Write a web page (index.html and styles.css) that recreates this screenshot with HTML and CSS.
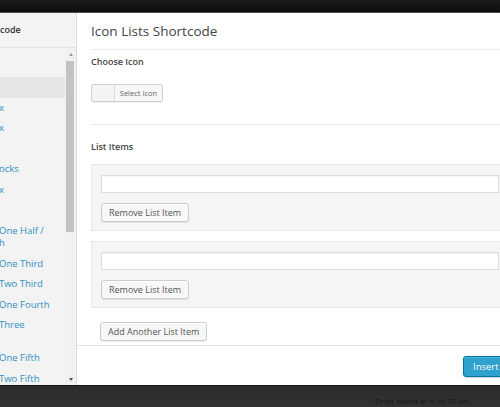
FILE: index.html
```html
<!DOCTYPE html>
<html>
<head>
<meta charset="utf-8">
<link rel="stylesheet" href="styles.css">
</head>
<body>
<div class="topbar"></div>
<div class="modal">
  <aside class="side">
    <div class="side-head">code</div>
    <div class="side-body">
      <ul class="menu">
        <li class="active">&nbsp;</li>
        <li>x</li>
        <li>x</li>
        <li>&nbsp;</li>
        <li>ocks</li>
        <li>x</li>
        <li>&nbsp;</li>
        <li>One Half /<br>h</li>
        <li>One Third</li>
        <li>Two Third</li>
        <li>One Fourth</li>
        <li>Three<br>&nbsp;</li>
        <li>One Fifth</li>
        <li>Two Fifth</li>
      </ul>
      <div class="scroll">
        <div class="arrow up"></div>
        <div class="thumb"></div>
        <div class="track"></div>
        <div class="arrow down"></div>
      </div>
    </div>
  </aside>
  <main class="main">
    <header class="main-head"><h1>Icon Lists Shortcode</h1></header>
    <div class="content">
      <section class="field field-icon">
        <h2>Choose Icon</h2>
        <div class="picker"><span class="swatch"></span><span class="pick-btn">Select Icon</span></div>
      </section>
      <section class="field">
        <h2>List Items</h2>
        <div class="item-box">
          <input class="text-input" type="text">
          <button class="btn">Remove List Item</button>
        </div>
        <div class="item-box">
          <input class="text-input" type="text">
          <button class="btn">Remove List Item</button>
        </div>
        <button class="btn btn-add">Add Another List Item</button>
      </section>
    </div>
    <footer class="main-foot"><button class="btn-primary">Insert Icon List</button></footer>
  </main>
</div>
<div class="bottombar"><span class="draft">Draft saved at 4:16:37 am.</span></div>
</body>
</html>
```

FILE: styles.css
```css
* { box-sizing: border-box; margin: 0; padding: 0; }
html, body { overflow: hidden; }
body {
  width: 500px;
  height: 407px;
  background: #2d2d2d;
  font-family: "Open Sans", "Liberation Sans", sans-serif;
  display: flex;
  flex-direction: column;
}
.topbar {
  flex: none;
  height: 13px;
  background: linear-gradient(#1c1c1c, #0e0e0e);
  border-bottom: 1px solid #4a4a4a;
}
.modal {
  flex: none;
  display: flex;
  width: 568px;
  height: 372px;
  background: #fff;
}
.side {
  flex: none;
  width: 77px;
  background: #f3f3f3;
  border-right: 1px solid #dcdcdc;
  display: flex;
  flex-direction: column;
}
.side-head {
  height: 35px;
  line-height: 34px;
  border-bottom: 1px solid #e2e2e2;
  font-size: 9px;
  font-weight: 600;
  color: #333;
}
.side-body {
  flex: 1;
  display: flex;
  overflow: hidden;
}
.menu {
  flex: 1;
  list-style: none;
  padding-top: 29px;
  overflow: hidden;
}
.menu li {
  font-size: 9.5px;
  line-height: 12.5px;
  padding: 4px 0;
  margin-left: -1px;
  color: #2e8fc0;
  white-space: nowrap;
}
.menu li.active { background: #e6e6e6; }
.scroll {
  flex: none;
  width: 11px;
  display: flex;
  flex-direction: column;
  background: #f1f1f1;
}
.arrow {
  height: 13px;
  display: flex;
  align-items: center;
  justify-content: center;
}
.arrow::before {
  content: "";
  border-left: 2.5px solid transparent;
  border-right: 2.5px solid transparent;
}
.arrow.up::before { border-bottom: 3px solid #9a9a9a; }
.arrow.down { height: 12px; }
.arrow.down::before { border-top: 3px solid #555; }
.thumb {
  height: 171px;
  margin: 0 2px 0 1px;
  background: #c3c3c3;
}
.track { flex: 1; }

.main {
  flex: 1;
  display: flex;
  flex-direction: column;
}
.main-head {
  margin: 0 14px;
  height: 37px;
  border-bottom: 1px solid #ececec;
}
.main-head h1 {
  font-size: 13.5px;
  font-weight: 400;
  line-height: 36px;
  color: #444;
}
.content {
  flex: 1;
  padding: 0 14px;
}
.field h2 {
  font-size: 9px;
  font-weight: 600;
  line-height: 12px;
  color: #444;
}
.field-icon {
  padding-bottom: 22px;
  border-bottom: 1px solid #ececec;
}
.field-icon h2 { margin-top: 6px; }
.field + .field h2 { margin-top: 16px; }
.picker {
  margin-top: 16px;
  display: flex;
  width: 72px;
  height: 18px;
  border: 1px solid #cfcfcf;
  border-radius: 2px;
  box-shadow: 0 1px 0 rgba(0,0,0,0.05);
}
.swatch {
  width: 23px;
  background: #f4f4f4;
  border-right: 1px solid #dcdcdc;
}
.pick-btn {
  flex: 1;
  font-size: 7.5px;
  line-height: 16px;
  text-align: center;
  color: #666;
  background: #f7f7f7;
}
.item-box {
  margin-top: 11px;
  background: #f5f5f5;
  border: 1px solid #e8e8e8;
  padding: 10px 9px 8px;
}
.item-box + .item-box { margin-top: 10px; }
.text-input {
  display: block;
  width: 398px;
  height: 18px;
  background: #fff;
  border: 1px solid #dddddd;
  box-shadow: inset 0 1px 2px rgba(0,0,0,0.06);
}
.btn {
  display: block;
  margin-top: 10px;
  height: 19px;
  padding: 0 7px;
  font-family: inherit;
  font-size: 9px;
  line-height: 17px;
  color: #555;
  background: #f7f7f7;
  border: 1px solid #cccccc;
  border-radius: 3px;
  box-shadow: inset 0 1px 0 #fff, 0 1px 0 rgba(0,0,0,0.07);
}
.btn-add {
  margin-top: 14px;
  margin-left: 9px;
}
.main-foot {
  flex: none;
  height: 40px;
  border-top: 1px solid #e5e5e5;
  display: flex;
  align-items: flex-start;
  padding: 10px 0 0 386px;
}
.btn-primary {
  flex: none;
  height: 21px;
  padding: 0 9px;
  font-family: inherit;
  font-size: 9.5px;
  color: #fff;
  background: #2ea2cc;
  border: 1px solid #0074a2;
  border-radius: 3px;
  white-space: nowrap;
  box-shadow: inset 0 1px 0 rgba(120,200,230,0.5), 0 1px 0 rgba(0,0,0,0.15);
}
.bottombar {
  flex: 1;
  border-top: 1px solid #151515;
  background: linear-gradient(#2b2b2b, #333);
  padding: 1px 0 0 375px;
}
.draft {
  font-size: 8px;
  line-height: 12px;
  color: #181818;
  white-space: nowrap;
}
```
